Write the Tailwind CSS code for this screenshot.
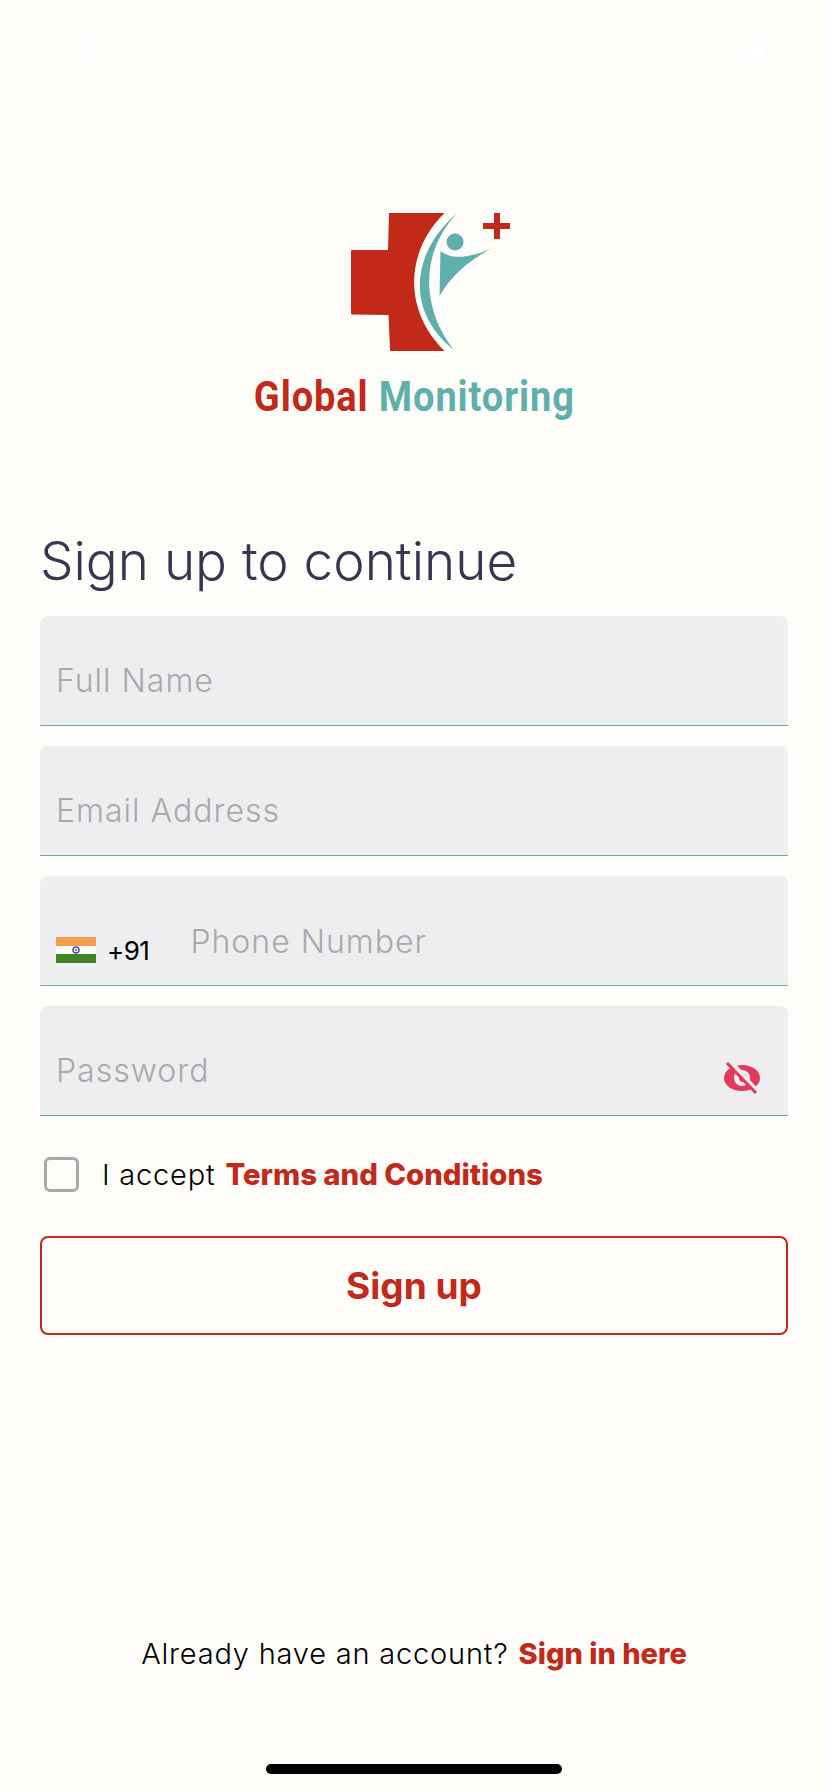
<!DOCTYPE html>
<html lang="en">
<head>
    <meta charset="UTF-8">
    <meta name="viewport" content="width=device-width, initial-scale=1.0">
    <title>Sign up</title>
    <script src="https://cdn.jsdelivr.net/npm/@tailwindcss/browser@4"></script>
</head>
<body class="bg-[#fffdfa] min-h-screen font-['Inter',sans-serif]">
<div class="h-[1792px] flex flex-col">

    <!-- Status bar (white on white in the original) -->
    <div class="h-[100px] flex items-start justify-between pl-[64px] text-white">
        <span class="mt-[31px] text-[32px] leading-[36px] font-semibold">12:13</span>
        <svg class="mt-[36px] mr-[32px]" width="144" height="28" viewBox="0 0 144 28" fill="none">
            <rect x="1" y="17" width="5" height="7" fill="#fff"/>
            <rect x="11" y="12" width="5" height="12" fill="#fff"/>
            <rect x="21" y="7" width="7" height="17" fill="#fff"/>
            <path d="M47 14 C47 2 66 2 68 14 C70 24 80 20 79 12 M56 16 C56 10 64 10 66 16" stroke="#fff" stroke-width="3"/>
            <rect x="90" y="2" width="45" height="24" rx="5" stroke="#fff" stroke-width="1.500"/>
            <rect x="93" y="6" width="20" height="16" rx="2" fill="#fff"/>
            <rect x="138" y="10" width="4" height="6" fill="#fff"/>
        </svg>
    </div>

    <!-- Logo -->
    <div class="h-[389px] flex flex-col items-center">
        <svg class="mt-[113px] ml-[3px]" width="370" height="172" viewBox="0 0 370 172">
            <path d="M158 24.500 Q157 24 157.500 24 L213.500 24 C173 64 173 122 213.500 162 L160 162 Q159 162 159 161 L157.500 126 L121 125.500 Q120 125.500 120 124.500 L120 62 Q120 61 121 61 L157 61 Z" fill="#c22919" transform="translate(0,-24)"/>
            <g transform="translate(0,-24)" fill="#5fafab">
                <path d="M226 24 C178 66 176 124 223 161 C195 126 184 70 226 24 Z"/>
                <circle cx="224" cy="53" r="8.500"/>
                <path d="M209.500 62 C222 72 240 68 262 59 C240 70 222 84 208.500 107 Z"/>
            </g>
            <g transform="translate(0,-24)" fill="#c22919">
                <rect x="252" y="34" width="27" height="6"/>
                <rect x="263" y="24" width="6" height="26"/>
            </g>
        </svg>
        <p class="mt-[-11px] text-[42px] leading-[46px] font-bold whitespace-pre font-['Roboto',sans-serif] scale-x-[0.905] tracking-[1px]"><span class="text-[#c22919]">Global</span> <span class="text-[#5fafab]">Monitoring</span></p>
    </div>

    <!-- Form -->
    <main class="px-[40px] flex flex-col">
        <h1 class="text-[53px] leading-[62px] font-light text-[#363650] mt-[41px] mb-[24px]">Sign up to continue</h1>

        <div class="flex flex-col gap-[20px]">
            <input type="text" placeholder="Full Name" class="h-[110px] w-full bg-[#eeeef1] rounded-t-lg border-b border-[#62adab] px-4 pt-5 text-[32px] tracking-[1px] font-light placeholder:text-[#a9a9ab] outline-none">
            <input type="email" placeholder="Email Address" class="h-[110px] w-full bg-[#eeeef1] rounded-t-lg border-b border-[#62adab] px-4 pt-5 text-[32px] tracking-[1px] font-light placeholder:text-[#a9a9ab] outline-none">

            <div class="h-[110px] bg-[#eeeef1] rounded-t-lg border-b border-[#62adab] flex items-center px-4">
                <div class="flex items-center mt-[39px]">
                    <svg width="40" height="26" viewBox="0 0 40 26">
                        <rect width="40" height="9" fill="#f49d4b"/>
                        <rect y="9" width="40" height="8" fill="#fff"/>
                        <rect y="17" width="40" height="9" fill="#3f8425"/>
                        <circle cx="20" cy="13" r="3" fill="none" stroke="#4b4db5" stroke-width="1.500"/>
                        <circle cx="20" cy="13" r="1" fill="#4b4db5"/>
                    </svg>
                    <span class="ml-[11px] text-[26px] text-black tracking-[-0.5px]">+91</span>
                </div>
                <input type="tel" placeholder="Phone Number" class="ml-[41px] flex-1 min-w-0 text-[32px] tracking-[1px] font-light placeholder:text-[#a9a9ab] outline-none mt-[22px]">
            </div>

            <div class="relative">
                <input type="password" placeholder="Password" class="h-[110px] w-full bg-[#eeeef1] rounded-t-lg border-b border-[#62adab] px-4 pt-5 text-[32px] tracking-[1px] font-light placeholder:text-[#a9a9ab] outline-none">
                <svg class="absolute right-[27px] top-[56px]" width="38" height="32" viewBox="0 0 38 32">
                    <ellipse cx="19" cy="16" rx="18" ry="13" fill="#e23a5a"/>
                    <circle cx="19" cy="16" r="8" fill="#eeeef1"/>
                    <circle cx="20" cy="16" r="4" fill="#e23a5a"/>
                    <path d="M7 -1 L35 31" stroke="#eeeef1" stroke-width="5"/>
                    <path d="M4 1 L33 31" stroke="#e23a5a" stroke-width="3"/>
                </svg>
            </div>
        </div>

        <div class="flex items-center mt-[37px] ml-[4px]">
            <span class="w-[35px] h-[35px] border-[3px] border-[#a9a9ab] rounded-[6px]"></span>
            <span class="ml-[23px] text-[29px] tracking-[0.8px] text-black font-light">I accept</span>
            <a class="ml-[10px] text-[29.300px] font-extrabold text-[#c22919]">Terms and Conditions</a>
        </div>

        <button class="mt-[39px] h-[99px] w-full border-2 border-[#c22919] rounded-lg text-[37px] font-bold text-[#c22919]">Sign up</button>
    </main>

    <!-- Footer -->
    <div class="mt-[299px] flex items-center justify-center text-[29px] leading-[40px]">
        <span class="text-black font-light tracking-[0.8px]">Already have an account?</span>
        <a class="ml-[10px] font-extrabold text-[#c22919]">Sign in here</a>
    </div>

    <!-- Home indicator -->
    <div class="mt-auto mb-[18px] w-[296px] h-[10px] bg-black rounded-full self-center"></div>
</div>
</body>
</html>
